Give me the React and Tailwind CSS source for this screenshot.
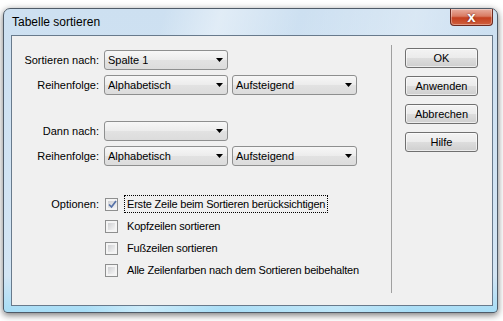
import React from "react";

const font = { fontFamily: '"Liberation Sans", Arial, sans-serif' };

function Arrow() {
  return (
    <svg width="7" height="4" viewBox="0 0 7 4" className="shrink-0">
      <polygon points="0,0 7,0 3.5,4" fill="#000" />
    </svg>
  );
}

function Combo({ value, w = "w-[124px]" }) {
  return (
    <div
      className={`${w} h-[20px] flex items-center justify-between pl-[3px] pr-[4px] border border-[#8e8f8f] rounded-[3px] bg-[linear-gradient(#f7f7f7,#ececec_50%,#e2e2e2_51%,#dcdcdc)] text-[11px] text-black`}
    >
      <span className="truncate">{value}</span>
      <Arrow />
    </div>
  );
}

function Button({ children }) {
  return (
    <div className="w-[73px] h-[20px] flex items-center justify-center border border-[#707070] rounded-[3px] bg-[linear-gradient(#f3f3f3,#ebebeb_50%,#dddddd_51%,#cfcfcf)] text-[11px] text-black shadow-[inset_0_0_0_1px_rgba(255,255,255,0.6)]">
      {children}
    </div>
  );
}

function Checkbox({ checked }) {
  return (
    <span className="w-[13px] h-[13px] ml-[1px] shrink-0 border border-[#8e8f8f] bg-[#f4f4f4] p-[2px] flex">
      <span className="flex-1 flex items-center justify-center bg-linear-to-br from-[#cfd0d3] to-[#f5f5f5]">
        {checked && (
          <svg width="9" height="9" viewBox="0 0 9 9">
            <path d="M1 4.5 L3.5 7 L8 1" fill="none" stroke="#5672a8" strokeWidth="1.7" />
          </svg>
        )}
      </span>
    </span>
  );
}

function Row({ label, children, className = "" }) {
  return (
    <div className={`flex items-center h-[20px] ${className}`}>
      <div className="w-[88px] text-right text-[11px] text-black pr-[1px]">{label}</div>
      <div className="ml-[4px] flex items-center gap-[4px]">{children}</div>
    </div>
  );
}

function Option({ label, checked, focused, first }) {
  return (
    <div className="flex items-center h-[22px]">
      <div className="w-[88px] text-right text-[11px] text-black pr-[1px]">{first ? "Optionen:" : ""}</div>
      <div className="ml-[4px] flex items-center">
        <Checkbox checked={checked} />
        <span
          className={`ml-[6px] px-[2px] h-[18px] flex items-center text-[11px] tracking-[-0.2px] text-black border border-dotted ${
            focused ? "border-black" : "border-transparent"
          }`}
        >
          {label}
        </span>
      </div>
    </div>
  );
}

export default function App() {
  return (
    <div className="w-[503px] h-[321px] bg-white pl-[3px] pt-[8px] overflow-hidden" style={font}>
      <div className="w-[495px] h-[305px] flex flex-col rounded-t-[7px] rounded-b-[4px] border border-[#4f5b68] shadow-[0_2px_7px_rgba(0,0,0,0.55)] bg-[linear-gradient(105deg,rgba(255,255,255,0)_28%,rgba(255,255,255,0.4)_38%,rgba(255,255,255,0)_52%,rgba(255,255,255,0.25)_72%,rgba(255,255,255,0)_85%),linear-gradient(180deg,#cde0f1_0%,#d3e5f4_88%,#a6ddf6_100%)]">
        {/* title bar */}
        <div className="h-[26px] flex items-start justify-between">
          <div className="pl-[8px] pt-[6px] text-[12px] leading-[14px] text-black">Tabelle sortieren</div>
          <div className="mr-[4px] w-[43px] h-[17px] flex items-center justify-center rounded-b-[4px] border border-t-0 border-[#6d2a20] bg-[linear-gradient(#e8ae9f,#d97b62_45%,#c4401f_55%,#d0603f)] shadow-[inset_0_0_0_1px_rgba(255,255,255,0.35)]">
            <span className="text-white font-bold text-[15px] leading-none -mt-[1px] [text-shadow:0_0_2px_#5a1a10]">x</span>
          </div>
        </div>

        {/* client area */}
        <div className="ml-[7px] w-[482px] h-[271px] border border-[#687a8c] bg-[#f0f0f0] flex">
          <div className="w-[379px] flex flex-col">
            <Row label="Sortieren nach:" className="mt-[14px]">
              <Combo value="Spalte 1" />
            </Row>
            <Row label="Reihenfolge:" className="mt-[5px]">
              <Combo value="Alphabetisch" />
              <Combo value="Aufsteigend" w="w-[125px]" />
            </Row>
            <Row label="Dann nach:" className="mt-[26px]">
              <Combo value="" />
            </Row>
            <Row label="Reihenfolge:" className="mt-[5px]">
              <Combo value="Alphabetisch" />
              <Combo value="Aufsteigend" w="w-[125px]" />
            </Row>
            <div className="mt-[27px] flex flex-col">
              <Option first checked focused label="Erste Zeile beim Sortieren berücksichtigen" />
              <Option label="Kopfzeilen sortieren" />
              <Option label="Fußzeilen sortieren" />
              <Option label="Alle Zeilenfarben nach dem Sortieren beibehalten" />
            </div>
          </div>
          <div className="w-px mt-[9px] h-[248px] bg-[#a0a0a0]" />
          <div className="pl-[13px] pt-[12px] flex flex-col gap-[8px]">
            <Button>OK</Button>
            <Button>Anwenden</Button>
            <Button>Abbrechen</Button>
            <Button>Hilfe</Button>
          </div>
        </div>
      </div>
    </div>
  );
}
